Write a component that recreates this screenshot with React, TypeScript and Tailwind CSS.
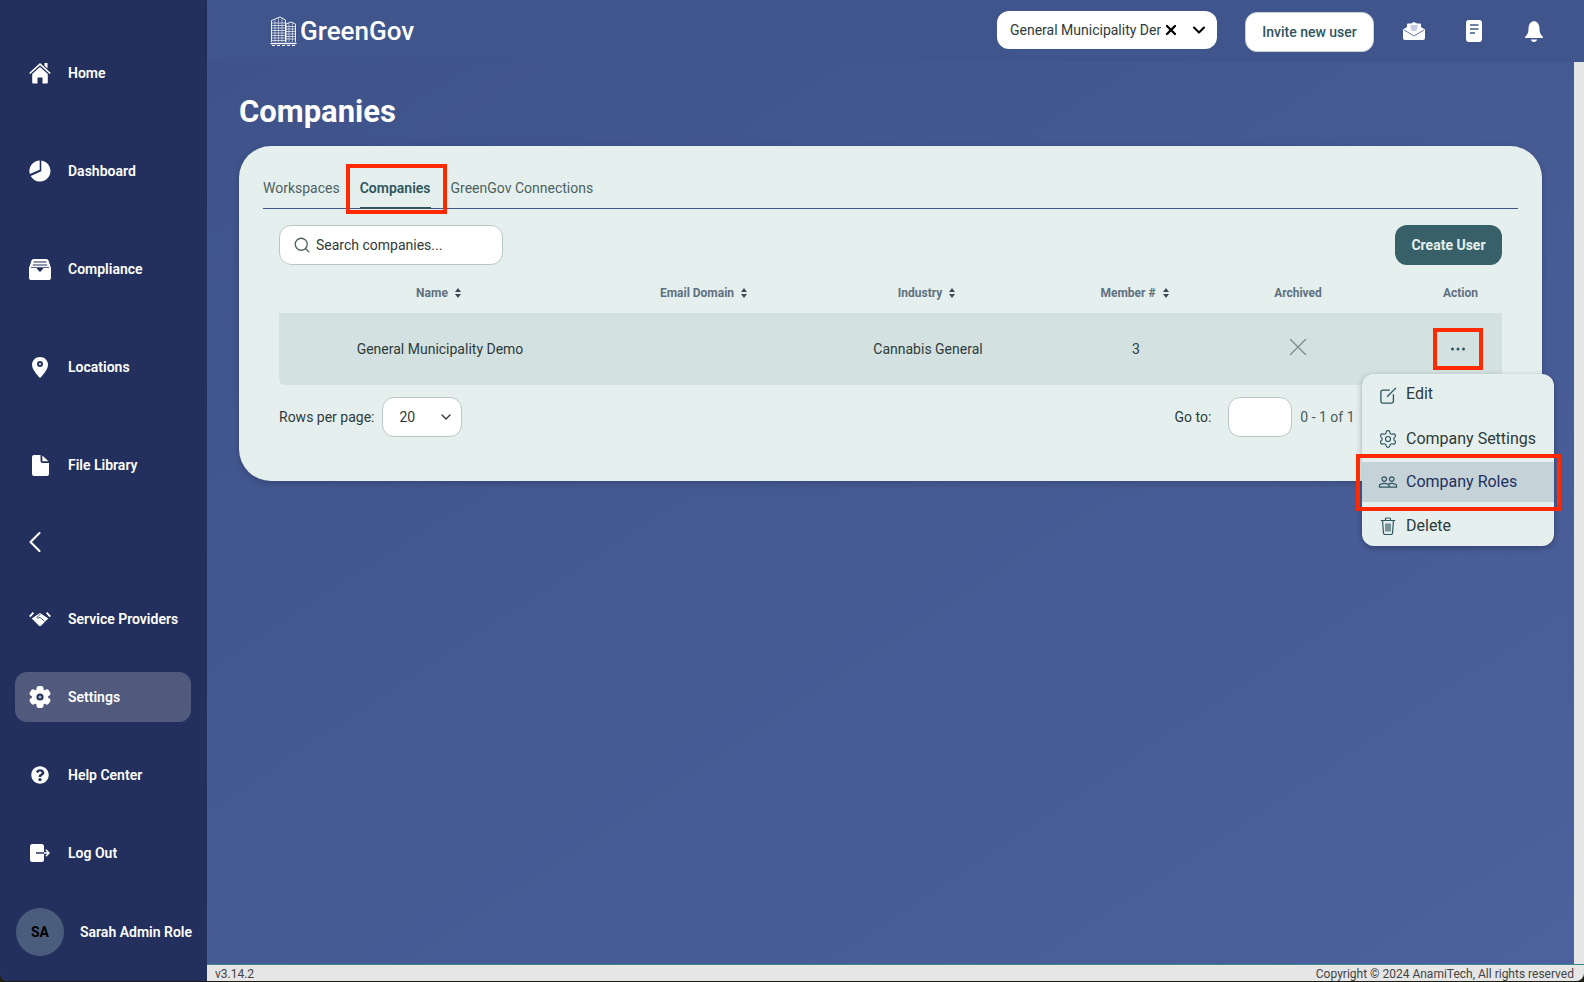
import { ChevronDown, ChevronLeft, Search, Settings, X } from "lucide-react"
import { FaQuestionCircle } from "react-icons/fa"
import { MdPeopleOutline } from "react-icons/md"

const NAVY = "#23305d"

function HomeIcon() {
  return (
    <svg width="22" height="22" viewBox="0 0 22 22" fill="white">
      <path d="M15.500 1h3v5.500l-3-2.700z" />
      <path d="M0.700 11.500 11 2.200l10.300 9.300" fill="none" stroke="white" strokeWidth="1.600" />
      <path d="M11 5 18.800 12v8.500q0 1-1 1H13.500v-6h-5v6H4.200q-1 0-1-1V12z" />
    </svg>
  )
}

function PieIcon() {
  return (
    <svg width="22" height="22" viewBox="0 0 22 22" fill="white">
      <path d="M12.300 0.600A10.500 10.500 0 1 1 1.700 16L12.300 11.300z" />
      <path d="M10.700 0.600A10.500 10.500 0 0 0 0.800 14L10.700 9.800z" />
    </svg>
  )
}

function TrayIcon() {
  return (
    <svg width="22" height="21" viewBox="0 0 22 21">
      <path fill="white" d="M0 9 2.500 1.500Q3 0 4.500 0h13Q19 0 19.500 1.500L22 9v10q0 2-2 2H2q-2 0-2-2z" />
      <path fill="none" stroke={NAVY} strokeWidth="1.200" d="M4.500 3h13M3.800 6h14.400" />
      <path fill={NAVY} d="M1.800 9h6l1 2h4.400l1-2h6l-.2-.7H2z" />
      <path fill={NAVY} d="M8.500 10.500h5L11 13z" />
    </svg>
  )
}

function PinIcon() {
  return (
    <svg width="16" height="21" viewBox="0 0 16 21">
      <path fill="white" d="M8 0C3.500 0 0 3.500 0 8c0 5 8 13 8 13s8-8 8-13c0-4.500-3.500-8-8-8z" />
      <circle cx="8" cy="7" r="3" fill={NAVY} />
      <circle cx="8" cy="7" r="1.300" fill="#b8bdcc" />
    </svg>
  )
}

function FileIcon() {
  return (
    <svg width="17" height="21" viewBox="0 0 17 21" fill="white">
      <path d="M2 0h6.500v6q0 2 2 2H17v11q0 2-2 2H2q-2 0-2-2V2q0-2 2-2z" />
      <path d="M10.300 0.500 16.500 6.300H10.300z" />
    </svg>
  )
}

function HandshakeIcon() {
  return (
    <svg width="24" height="16" viewBox="0 0 24 16">
      <path fill="white" d="M12 1.500 21 7.500 12.800 15.500q-.8.500-1.600 0L3 7.500z" />
      <path fill="none" stroke="white" strokeWidth="2" d="M0.800 5.500 4.800 1M23.200 5.500 19.200 1" />
      <path fill="none" stroke={NAVY} strokeWidth=".900" d="M12.500 2.500 8.500 6.500q1.500 1.200 3.500-.3L17 10.500" />
    </svg>
  )
}

function GearIcon() {
  return (
    <svg width="22" height="22" viewBox="0 0 22 22">
      <circle cx="11" cy="11" r="8" fill="white" />
      <rect x="7.500" y="0" width="7" height="22" rx="2.500" fill="white" />
      <rect x="7.500" y="0" width="7" height="22" rx="2.500" fill="white" transform="rotate(60 11 11)" />
      <rect x="7.500" y="0" width="7" height="22" rx="2.500" fill="white" transform="rotate(120 11 11)" />
      <circle cx="11" cy="11" r="3.600" fill={NAVY} />
      <circle cx="11" cy="11" r="1.600" fill="#aab0c2" />
    </svg>
  )
}

function LogoutIcon() {
  return (
    <svg width="20" height="18" viewBox="0 0 20 18">
      <rect width="14" height="18" rx="2.500" fill="white" />
      <path d="M6 9h8" stroke={NAVY} strokeWidth="1.500" />
      <path d="M14 9h4.500M15.800 5.800 19 9l-3.200 3.200" fill="none" stroke="white" strokeWidth="1.400" />
    </svg>
  )
}

function MailOpenIcon() {
  return (
    <svg width="22" height="18" viewBox="0 0 22 18">
      <path fill="white" d="M0 7.500 4 5V2.500Q4 1.500 5 1.500h3L11 0l3 1.500h3q1 0 1 1V5l4 2.500V16q0 2-2 2H2q-2 0-2-2z" />
      <path fill="none" stroke="#8c9bc0" strokeWidth="1" d="M7.500 4h7M7.500 6h7M8.500 8h5" />
      <path fill="none" stroke="#3f558c" strokeWidth=".800" d="M1 8l10 6 10-6" />
    </svg>
  )
}

function DocIcon() {
  return (
    <svg width="16" height="22" viewBox="0 0 16 22">
      <rect width="16" height="22" rx="3" fill="white" />
      <path fill="none" stroke="#3f558c" strokeWidth="1.300" d="M4 5h8.500M4 9h8.500M4 13h5" />
    </svg>
  )
}

function BellIcon() {
  return (
    <svg width="18" height="21" viewBox="0 0 18 21" fill="white">
      <path d="M9 0C5 .8 3.500 4 3.500 8c0 4-1.500 6-3.500 8v1h18v-1c-2-2-3.500-4-3.500-8C14.500 4 13 .8 9 0z" />
      <path d="M6 18.500h6c0 1.500-1.500 2.500-3 2.500s-3-1-3-2.500z" />
    </svg>
  )
}

function EditIcon() {
  return (
    <svg width="17" height="17" viewBox="0 0 19 19" fill="none" stroke="#2f5560" strokeWidth="1.500">
      <path d="M11 3.500H3a2 2 0 0 0-2 2V16a2 2 0 0 0 2 2h10a2 2 0 0 0 2-2V8" />
      <path d="M8 11 17.800 1" />
    </svg>
  )
}

function TrashIcon() {
  return (
    <svg width="16" height="18" viewBox="0 0 16 18" fill="none" stroke="#2f5560" strokeWidth="1.200">
      <path d="M.800 3.500h14.400M5.500 3.500V2q0-1 1-1h3q1 0 1 1v1.500" />
      <path d="M2.500 3.500 3.500 16q.100 1.500 1.500 1.500h6q1.400 0 1.500-1.500l1-12.500" />
      <path d="M6 6.500v8M8 6.500v8M10 6.500v8" />
    </svg>
  )
}

function LogoIcon() {
  return (
    <svg width="27" height="30" viewBox="0 0 27 30" fill="none" stroke="white">
      <path strokeWidth=".900" d="M1.500 26V4.500L10 1l5.500 3v22M16 26V8l5-2 4.500 2v18" />
      <path strokeWidth=".800" opacity=".85" d="M1.500 7h14M1.500 9.500h14M1.500 12h14M1.500 14.500h14M1.500 17h14M1.500 19.500h14M1.500 22h14M1.500 24.500h14M16 10.500h9.500M16 13h9.500M16 15.500h9.500M16 18h9.500M16 20.500h9.500M16 23h9.500" />
      <path strokeWidth=".700" opacity=".7" d="M5 3.500V26M8.500 2V26M12 2.500V26M19 7V26M22.500 7V26" />
      <path strokeWidth="1.400" d="M.500 27.500h26" />
      <path strokeWidth="1" strokeDasharray="3 2" d="M2 29.500h23" />
    </svg>
  )
}

const topNav = [
  { label: "Home", icon: <HomeIcon /> },
  { label: "Dashboard", icon: <PieIcon /> },
  { label: "Compliance", icon: <TrayIcon /> },
  { label: "Locations", icon: <PinIcon /> },
  { label: "File Library", icon: <FileIcon /> },
]

const bottomNav = [
  { label: "Service Providers", icon: <HandshakeIcon /> },
  { label: "Settings", icon: <GearIcon />, active: true },
  { label: "Help Center", icon: <FaQuestionCircle className="h-[18px] w-[18px]" /> },
  { label: "Log Out", icon: <LogoutIcon /> },
]

function SortArrows() {
  return (
    <svg width="6" height="10" viewBox="0 0 6 10" className="ml-[7px] shrink-0" fill="#3d4a55">
      <path d="M3 0 6 4H0z" />
      <path d="M3 10 0 6h6z" />
    </svg>
  )
}

function HeadCell({ label, sort }: { label: string; sort?: boolean }) {
  return (
    <div className={`flex items-center justify-center text-xs font-bold text-[#5f7080] ${sort ? "pr-[3px]" : ""}`}>
      {label}
      {sort && <SortArrows />}
    </div>
  )
}

export default function App() {
  return (
    <div className="h-[982px] w-[1584px] overflow-hidden bg-[#1d1d12]">
      <div className="relative flex h-[981px] w-[1584px] overflow-hidden rounded-b-[8px] bg-[#485c97] font-['Roboto',sans-serif]">
        <aside className="flex w-[207px] shrink-0 flex-col bg-[#23305d] pt-6 text-white">
          {topNav.map((item) => (
            <div key={item.label} className="flex h-[98px] items-center gap-[17px] pl-[29px]">
              <div className="flex w-[22px] justify-center">{item.icon}</div>
              <span className="text-sm font-semibold">{item.label}</span>
            </div>
          ))}
          <div className="flex h-[66px] items-start pl-[17px] pt-[10px]">
            <ChevronLeft className="h-9 w-9" strokeWidth={1.4} />
          </div>
          {bottomNav.map((item) => (
            <div key={item.label} className="flex h-[78px] items-center px-[15px]">
              <div className={`flex h-[50px] w-[176px] items-center gap-[17px] rounded-xl pl-[14px] ${item.active ? "bg-[#51597c]" : ""}`}>
                <div className="flex w-[22px] justify-center">{item.icon}</div>
                <span className="text-sm font-semibold">{item.label}</span>
              </div>
            </div>
          ))}
          <div className="flex h-[80px] items-center gap-4 pl-4">
            <div className="flex h-12 w-12 items-center justify-center rounded-full bg-[#4a5d7c] text-sm font-bold text-black">SA</div>
            <span className="text-sm font-semibold">Sarah Admin Role</span>
          </div>
        </aside>

        <div className="flex min-w-0 flex-1 flex-col">
          <header className="flex h-[62px] shrink-0 items-center bg-[#3f558c] pl-[63px] pr-[41px] shadow-[0_2px_4px_rgba(0,0,0,0.12)]">
            <div className="flex items-center gap-[3px]">
              <LogoIcon />
              <span className="text-[26px] font-medium leading-[32px] text-white">GreenGov</span>
            </div>
            <div className="ml-auto flex h-[38px] w-[220px] -translate-y-px items-center rounded-xl bg-white pl-[13px] pr-[8px] text-sm text-[#2f3a3a]">
              <span className="w-[151px] overflow-hidden whitespace-nowrap">General Municipality Demo</span>
              <X className="ml-[2px] h-4 w-4 text-black" strokeWidth={3.5} />
              <ChevronDown className="ml-auto h-5 w-5 text-black" strokeWidth={2.5} />
            </div>
            <button className="ml-[28px] mt-[2px] h-10 w-[129px] rounded-xl border border-[#c4d2d0] bg-white text-sm font-medium text-[#2f5560]">Invite new user</button>
            <div className="ml-[29px]">
              <MailOpenIcon />
            </div>
            <div className="ml-[41px]">
              <DocIcon />
            </div>
            <div className="ml-[43px]">
              <BellIcon />
            </div>
          </header>

          <main className="flex min-h-0 flex-1 flex-col bg-gradient-to-br from-[#3f538a] to-[#4c619d] px-[32px]">
            <h1 className="mt-[30px] text-[31px] font-bold leading-[40px] text-white">Companies</h1>
            <section className="mt-[14px] h-[335px] w-[1303px] rounded-[32px] bg-[#e5f0ee] px-6 pt-6 shadow-[0_2px_6px_rgba(0,0,0,0.2)]">
              <div className="flex h-[39px] items-start gap-5 border-b border-[#3f558c] text-sm leading-[36px] text-[#4c6160]">
                <span>Workspaces</span>
                <span className="h-[39px] border-b-2 border-[#2f5560] font-semibold text-[#2f5560]">Companies</span>
                <span>GreenGov Connections</span>
              </div>
              <div className="px-4">
                <div className="mt-4 flex items-center justify-between">
                  <div className="flex h-10 w-[224px] items-center gap-[5px] rounded-xl border border-[#b8c9c5] bg-white pl-[13px] text-sm text-[#2f3a3a]">
                    <Search className="h-[18px] w-[18px] text-[#4c6160]" strokeWidth={1.7} />
                    Search companies...
                  </div>
                  <button className="h-10 w-[107px] rounded-xl bg-[#386068] text-sm font-bold text-[#e5f0ee]">Create User</button>
                </div>
                <div className="grid h-[48px] grid-cols-[322px_208px_238px_178px_146px_131px] items-center pt-[8px]">
                  <HeadCell label="Name" sort />
                  <HeadCell label="Email Domain" sort />
                  <HeadCell label="Industry" sort />
                  <HeadCell label="Member #" sort />
                  <HeadCell label="Archived" />
                  <div className="pl-[48px]">
                    <HeadCell label="Action" />
                  </div>
                </div>
                <div className="grid h-[72px] grid-cols-[322px_208px_238px_178px_146px_131px] items-center rounded-b-md bg-[#d3e2e1] text-sm text-[#2f3a3a]">
                  <div className="text-center">General Municipality Demo</div>
                  <div />
                  <div className="text-center">Cannabis General</div>
                  <div className="text-center">3</div>
                  <div className="flex justify-center pb-[5px]">
                    <X className="h-[30px] w-[30px] text-[#7d8a8a]" strokeWidth={1} />
                  </div>
                  <div className="flex justify-center pl-[42px]">
                    <svg width="14" height="4" viewBox="0 0 14 4" fill="#2f5560">
                      <circle cx="1.500" cy="2" r="1.500" />
                      <circle cx="7" cy="2" r="1.500" />
                      <circle cx="12.500" cy="2" r="1.500" />
                    </svg>
                  </div>
                </div>
                <div className="mt-3 flex items-center text-sm text-[#2f3a3a]">
                  <span>Rows per page:</span>
                  <div className="ml-2 flex h-10 w-[80px] items-center justify-between rounded-xl border border-[#b8c9c5] bg-white pl-4 pr-[7px]">
                    20
                    <ChevronDown className="h-4 w-4" />
                  </div>
                  <span className="ml-[712px]">Go to:</span>
                  <div className="ml-[17px] h-10 w-16 rounded-xl border border-[#b8c9c5] bg-white" />
                  <span className="ml-2 text-[#4c5a5a]">0 - 1 of 1</span>
                </div>
              </div>
            </section>
          </main>

          <footer className="flex h-[17px] shrink-0 items-center justify-between border-t border-[#3d8a8a] bg-[#e6e6e6] pl-[8px] pr-[10px] pt-[1px] text-xs leading-[14px] text-[#444]">
            <span>v3.14.2</span>
            <span>Copyright © 2024 AnamiTech, All rights reserved</span>
          </footer>
        </div>

        {/* scrollbar track */}
        <div className="absolute right-0 top-[62px] h-[902px] w-[10px] bg-[#e6e6e6]" />

        {/* row action menu */}
        <div className="absolute left-[1362px] top-[374px] w-[192px] overflow-hidden rounded-xl bg-[#e5f0ee] text-base text-[#2f3a3a] shadow-[0_2px_6px_rgba(0,0,0,0.3)]">
          <div className="flex h-[40px] items-center gap-[8px] pl-[16px]">
            <div className="flex w-[20px] justify-center pt-[2px]">
              <EditIcon />
            </div>
            Edit
          </div>
          <div className="flex h-[48px] items-center gap-[8px] pl-[16px] pt-[2px]">
            <Settings className="h-[20px] w-[20px] text-[#2f5560]" strokeWidth={1.4} />
            Company Settings
          </div>
          <div className="flex h-[40px] items-center gap-[8px] bg-[#c5d3d9] pl-[16px] text-[#23305d]">
            <MdPeopleOutline className="h-[20px] w-[20px] text-[#2f5560]" />
            Company Roles
          </div>
          <div className="flex h-[44px] items-center gap-[8px] pl-[16px] pt-[3px]">
            <div className="flex w-[20px] justify-center">
              <TrashIcon />
            </div>
            Delete
          </div>
        </div>

        {/* red annotation boxes */}
        <div className="absolute left-[346px] top-[164px] h-[50px] w-[101px] border-[4px] border-[#ff2a00]" />
        <div className="absolute left-[1433px] top-[328px] h-[42px] w-[50px] border-[4px] border-[#ff2a00]" />
        <div className="absolute left-[1356px] top-[454px] h-[57px] w-[205px] border-[4px] border-[#ff2a00]" />
      </div>
    </div>
  )
}
